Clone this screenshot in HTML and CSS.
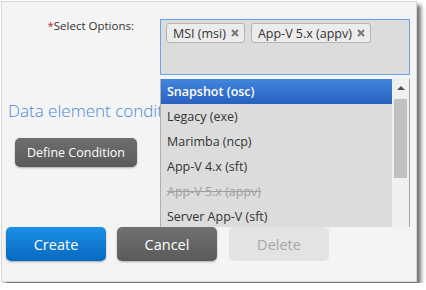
FILE: index.html
```html
<!DOCTYPE html>
<html>
<head>
<meta charset="utf-8">
<link rel="stylesheet" href="styles.css">
</head>
<body>
<div class="panel">
  <div class="top">
    <div class="form-row">
      <div class="label"><span class="req">*</span>Select Options:</div>
      <div class="select-box">
        <span class="tag">MSI (msi)<svg class="x" viewBox="0 0 8 8" width="8" height="8"><path d="M1 1L7 7M7 1L1 7"/></svg></span>
        <span class="tag">App-V 5.x (appv)<svg class="x" viewBox="0 0 8 8" width="8" height="8"><path d="M1 1L7 7M7 1L1 7"/></svg></span>
      </div>
    </div>
    <div class="heading">Data element condition</div>
    <button class="btn-define">Define Condition</button>
    <div class="dropdown">
      <ul class="options">
        <li class="opt active">Snapshot (osc)</li>
        <li class="opt">Legacy (exe)</li>
        <li class="opt">Marimba (ncp)</li>
        <li class="opt">App-V 4.x (sft)</li>
        <li class="opt disabled">App-V 5.x (appv)</li>
        <li class="opt">Server App-V (sft)</li>
        <li class="opt">Virtual (vmx)</li>
      </ul>
      <div class="scrollbar">
        <div class="arrow"></div>
        <div class="thumb"></div>
      </div>
    </div>
  </div>
  <div class="actions">
    <button class="btn btn-create">Create</button>
    <button class="btn btn-cancel">Cancel</button>
    <button class="btn btn-delete">Delete</button>
  </div>
</div>
</body>
</html>
```
FILE: styles.css
```css
html, body { margin: 0; padding: 0; background: #fff; }
body { font-family: "Open Sans", "Noto Sans", sans-serif; }
.panel {
  margin: 1px;
  width: 416px;
  height: 281px;
  box-sizing: border-box;
  border: 1px solid #d6d6d6;
  background: #f4f4f4;
  box-shadow: 4px 4px 4px rgba(0,0,0,0.55);
}
.top {
  position: relative;
  height: 225px;
  overflow: hidden;
}
.form-row {
  display: flex;
  padding-top: 17px;
}
.label {
  width: 132px;
  margin-right: 26px;
  text-align: right;
  font-size: 11.5px;
  color: #333;
  line-height: 14px;
  padding-top: 0px;
}
.req { color: #c62828; }
.select-box {
  box-sizing: border-box;
  width: 250px;
  height: 56px;
  border: 1px solid #6aa3f2;
  background: #dcdcdc;
  padding: 3px 5px;
  display: flex;
  align-items: flex-start;
  gap: 6px;
}
.tag {
  box-sizing: border-box;
  height: 20px;
  display: flex;
  align-items: center;
  gap: 5px;
  padding: 0 5px 0 6px;
  border: 1px solid #b4b4b4;
  border-radius: 3px;
  background: #ececec;
  font-size: 12.5px;
  color: #333;
}
.x { stroke: #7a7a7a; stroke-width: 2.2; fill: none; }
.heading {
  margin-top: 25px;
  padding-left: 6px;
  font-size: 17px;
  line-height: 22px;
  color: #4a8ad6;
  white-space: nowrap;
  font-weight: 300;
}
.btn-define {
  display: block;
  margin: 16px 0 0 13px;
  width: 122px;
  height: 29px;
  border: none;
  border-radius: 5px;
  background: linear-gradient(#6e6e6e, #5a5a5a);
  color: #fff;
  font-family: inherit;
  font-size: 12.5px;
  box-shadow: 0 1px 2px rgba(0,0,0,0.3);
  padding: 0;
}
.dropdown {
  position: absolute;
  top: 77px;
  left: 158px;
  width: 250px;
  height: 170px;
  box-sizing: border-box;
  border-left: 1px solid #b0b0b0;
  border-right: 1px solid #a8a8a8;
  background: #dcdcdc;
  display: flex;
}
.options {
  list-style: none;
  margin: 0;
  padding: 0;
  flex: 1;
}
.opt {
  height: 25px;
  line-height: 25px;
  padding-left: 6px;
  font-size: 12.5px;
  color: #333;
  white-space: nowrap;
}
.opt.active {
  background: linear-gradient(#3f86de, #2a60c0);
  color: #fff;
  font-weight: 600;
}
.opt.disabled { color: #a0a0a0; text-decoration: line-through; }
.scrollbar {
  width: 17px;
  background: #f0f0f0;
  position: relative;
}
.arrow {
  margin: 7px auto 0;
  width: 0; height: 0;
  border-left: 4px solid transparent;
  border-right: 4px solid transparent;
  border-bottom: 4px solid #505050;
}
.thumb {
  margin: 9px 0 0 2px;
  width: 13px;
  height: 79px;
  background: #c1c1c1;
}
.actions {
  display: flex;
  gap: 11px;
  padding-left: 4px;
}
.btn {
  width: 100px;
  height: 34px;
  border: none;
  border-radius: 5px;
  font-family: inherit;
  font-size: 14.5px;
  padding: 0;
}
.btn-create { background: linear-gradient(#1b8fe6, #0869c0); color: #fff; box-shadow: 0 1px 2px rgba(0,0,0,0.3); }
.btn-cancel { background: linear-gradient(#717171, #5a5a5a); color: #fff; box-shadow: 0 1px 2px rgba(0,0,0,0.3); }
.btn-delete { background: #e3e3e3; color: #a8a8a8; margin-left: 1px; }
```
